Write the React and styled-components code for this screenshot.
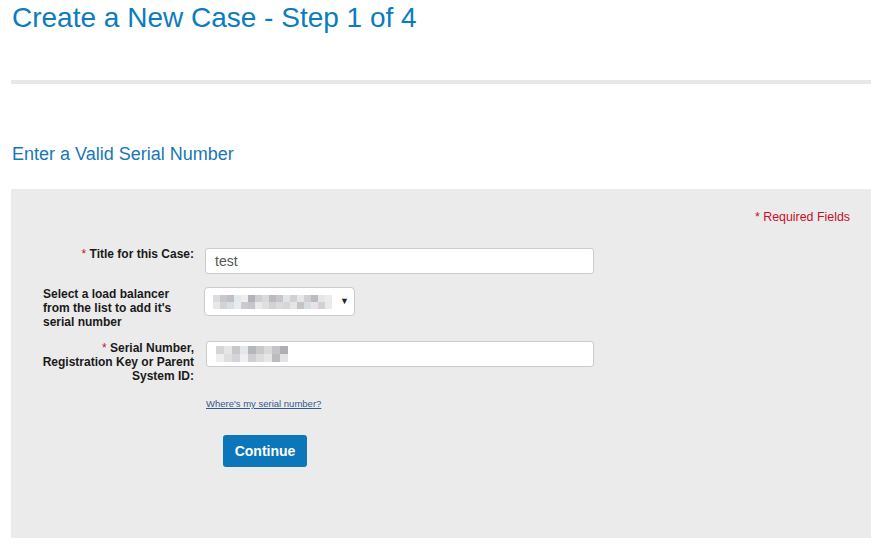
import React from "react";
import styled, { createGlobalStyle } from "styled-components";

const Global = createGlobalStyle`
  html, body { margin: 0; padding: 0; background: #fff; }
  body { font-family: "Liberation Sans", Arial, sans-serif; }
  * { box-sizing: border-box; }
`;

const Page = styled.div`
  padding: 0 8px 0 11px;
  width: 879px;
`;

const Title = styled.h1`
  margin: 0;
  padding: 2px 0 0 1px;
  font-weight: normal;
  font-size: 28px;
  line-height: 32px;
  color: #0b7cc0;
`;

const Rule = styled.hr`
  margin: 46px 0 0 0;
  border: 0;
  height: 4px;
  background: #e8e8e8;
`;

const Subtitle = styled.h2`
  margin: 59px 0 0 0;
  padding-left: 1px;
  font-weight: normal;
  font-size: 18px;
  line-height: 22px;
  color: #1877b5;
`;

const Panel = styled.div`
  margin-top: 24px;
  background: #ebebeb;
  height: 349px;
  padding: 21px 21px 0 31px;
  display: flex;
  flex-direction: column;
`;

const Required = styled.div`
  align-self: flex-end;
  font-size: 12.4px;
  line-height: 14px;
  color: #c8102e;
`;

const Form = styled.div`
  display: grid;
  grid-template-columns: 152px 1fr;
  column-gap: 11px;
  align-items: start;
  margin-top: 23px;
`;

const Label = styled.div`
  font-size: 12px;
  line-height: 14px;
  font-weight: bold;
  color: #1a1a1a;
  text-align: ${(p) => (p.$left ? "left" : "right")};
  padding-left: ${(p) => (p.$left ? 1 : 0)}px;
  margin-top: ${(p) => p.$mt || 0}px;
`;

const Star = styled.span`
  color: #c8102e;
  font-weight: normal;
`;

const Field = styled.div`
  margin-top: ${(p) => p.$mt || 0}px;
  margin-left: ${(p) => p.$ml || 0}px;
`;

const Input = styled.div`
  width: ${(p) => p.$w || 389}px;
  height: 26px;
  background: #fff;
  border: 1px solid #cbcbcb;
  border-radius: 3px;
  display: flex;
  align-items: center;
  padding-left: 9px;
  font-size: 14px;
  color: #555;
`;

const Select = styled.div`
  width: 151px;
  height: 29px;
  margin-left: -1px;
  background: #fff;
  border: 1px solid #cbcbcb;
  border-radius: 4px;
  display: flex;
  align-items: center;
  justify-content: space-between;
  padding: 0 5px 0 8px;
`;

const Arrow = styled.span`
  font-size: 9px;
  color: #222;
  line-height: 1;
`;

const Blur = styled.div`
  display: grid;
  grid-template-columns: repeat(${(p) => p.$cols}, ${(p) => p.$w}px);
  grid-auto-rows: ${(p) => p.$h}px;
`;

const Cell = styled.span`
  display: block;
  background: ${(p) => p.$c};
`;

const Link = styled.a`
  display: block;
  margin-top: 31px;
  font-size: 9.5px;
  line-height: 12px;
  color: #34598e;
  text-decoration: underline;
  cursor: pointer;
`;

const Button = styled.button`
  margin: 25px 0 0 17px;
  width: 84px;
  height: 32px;
  border: 0;
  border-radius: 3px;
  background: #0b76b9;
  color: #fff;
  font-family: "Liberation Sans", Arial, sans-serif;
  font-weight: bold;
  font-size: 14px;
  cursor: pointer;
`;

const selectColors = [
  "#dedbde", "#cbc6cb", "#c0bfc4", "#e3e9ee", "#eeeeee", "#b3b2ba", "#cfccd2", "#dadadd",
  "#bfb9bd", "#c6c6cb", "#e1e4e9", "#d4cfd0", "#e6e5e7", "#d0d0d4", "#bdbbc0", "#e6e5e8", "#ececec",
  "#e8e8e9", "#d3d2d6", "#d9dee4", "#e8ebef", "#cbcace", "#c6c5ca", "#eaeaea", "#dfdfe1",
  "#d4d1d5", "#dcdade", "#d6d6d6", "#e6e4e6", "#c7c2c7", "#d8dde2", "#e5e5e5", "#d4d0d4", "#eaeaeb",
];

const serialColors = [
  "#d9d4d4", "#e6e4e4", "#c9c7c9", "#e2e7eb", "#b6b7bc", "#cbc8cb", "#dadadd", "#c6c4c6", "#afafb3",
  "#eeeeee", "#dfdfe0", "#d3d4d8", "#efefef", "#cfcfd2", "#dcdcde", "#e6e6e6", "#bcbcbf", "#e3e3e3",
];

export default function App() {
  return (
    <>
      <Global />
      <Page>
        <Title>Create a New Case - Step 1 of 4</Title>
        <Rule />
        <Subtitle>Enter a Valid Serial Number</Subtitle>
        <Panel>
          <Required>* Required Fields</Required>
          <Form>
            <Label>
              <Star>*</Star> Title for this Case:
            </Label>
            <Field $mt={1}>
              <Input>test</Input>
            </Field>

            <Label $left $mt={13}>
              Select a load balancer
              <br />
              from the list to add it's
              <br />
              serial number
            </Label>
            <Field $mt={13}>
              <Select>
                <Blur $cols={17} $w={7} $h={7}>
                  {selectColors.map((c, i) => (
                    <Cell key={i} $c={c} />
                  ))}
                </Blur>
                <Arrow>▼</Arrow>
              </Select>
            </Field>

            <Label $mt={12}>
              <Star>*</Star> Serial Number,
              <br />
              Registration Key or Parent
              <br />
              System ID:
            </Label>
            <Field $mt={12} $ml={1}>
              <Input $w={388}>
                <Blur $cols={9} $w={8} $h={8}>
                  {serialColors.map((c, i) => (
                    <Cell key={i} $c={c} />
                  ))}
                </Blur>
              </Input>
              <Link>Where's my serial number?</Link>
              <Button>Continue</Button>
            </Field>
          </Form>
        </Panel>
      </Page>
    </>
  );
}
